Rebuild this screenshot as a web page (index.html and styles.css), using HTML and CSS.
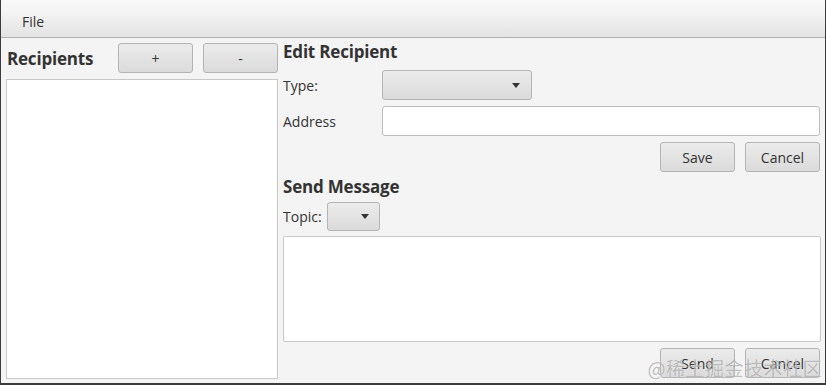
FILE: index.html
```html
<!DOCTYPE html>
<html>
<head>
<meta charset="utf-8">
<link rel="stylesheet" href="styles.css">
</head>
<body>
<div class="window">
  <div class="menubar"><span class="menu">File</span></div>
  <div class="main">
    <section class="left">
      <div class="left-head">
        <h2 class="title">Recipients</h2>
        <button class="btn">+</button>
        <button class="btn">-</button>
      </div>
      <div class="list"></div>
    </section>
    <section class="right">
      <h2 class="title title-edit">Edit Recipient</h2>
      <div class="form">
        <label class="label">Type:</label>
        <div class="combo combo-type"><span class="arrow"></span></div>
        <label class="label">Address</label>
        <div class="field"></div>
      </div>
      <div class="actions">
        <button class="btn">Save</button>
        <button class="btn">Cancel</button>
      </div>
      <h2 class="title title-send">Send Message</h2>
      <div class="topic-row">
        <label class="label">Topic:</label>
        <div class="combo combo-topic"><span class="arrow"></span></div>
      </div>
      <div class="message"></div>
      <div class="actions">
        <button class="btn">Send</button>
        <button class="btn">Cancel</button>
      </div>
    </section>
  </div>
  <div class="watermark">@稀土掘金技术社区</div>
</div>
</body>
</html>
```

FILE: styles.css
```css
* { box-sizing: border-box; }
html, body { margin: 0; padding: 0; }
body {
  width: 826px;
  height: 385px;
  overflow: hidden;
  font-family: "Open Sans", "Noto Sans", sans-serif;
  color: #333333;
}
.window {
  position: relative;
  width: 826px;
  height: 385px;
  background: #f4f4f4;
  border-left: 1px solid #3c3c3c;
  border-right: 1px solid #3c3c3c;
  border-bottom: 2px solid #3c3c3c;
  display: flex;
  flex-direction: column;
}
.menubar {
  height: 38px;
  flex: none;
  background: linear-gradient(#f9f9f9 0%, #f3f3f3 35%, #e3e3e3 100%);
  border-bottom: 1px solid #b0b0b0;
  display: flex;
  align-items: center;
  padding-left: 21px;
}
.menu {
  font-size: 14px;
  color: #333;
  padding-top: 6px;
}
.main {
  flex: 1;
  display: flex;
  gap: 5px;
  padding: 0 4px 0 5px;
}
.left {
  width: 272px;
  flex: none;
  padding-top: 5px;
  display: flex;
  flex-direction: column;
  gap: 6px;
}
.left-head {
  height: 30px;
  display: flex;
  align-items: center;
  gap: 10px;
}
.left-head .title { flex: 1; padding-left: 1px; }
.left-head .btn { width: 75px; }
.title {
  margin: 0;
  font-size: 17px;
  font-weight: 700;
  color: #333;
  letter-spacing: -0.2px;
}
.list {
  height: 300px;
  background: #fff;
  border: 1px solid #c8c8c8;
}
.right {
  flex: 1;
  display: flex;
  flex-direction: column;
}
.title-edit {
  height: 27px;
  line-height: 27px;
  margin-bottom: 5px;
}
.title-send {
  height: 29px;
  line-height: 29px;
}
.btn {
  height: 30px;
  padding: 0;
  border: 1px solid #b4b4b4;
  border-radius: 3px;
  background: linear-gradient(#ebebeb, #dbdbdb);
  font-family: inherit;
  font-size: 14px;
  color: #333;
}
.form {
  display: grid;
  grid-template-columns: 99px 1fr;
  grid-auto-rows: 30px;
  row-gap: 6px;
  align-items: center;
}
.label {
  font-size: 14px;
  color: #333;
}
.combo {
  height: 30px;
  border: 1px solid #b4b4b4;
  border-radius: 3px;
  background: linear-gradient(#ebebeb, #dbdbdb);
  display: flex;
  align-items: center;
  justify-content: flex-end;
}
.combo-type { width: 150px; padding-right: 11px; }
.combo-topic { width: 53px; padding-right: 10px; height: 29px; }
.arrow {
  width: 0;
  height: 0;
  border-left: 4px solid transparent;
  border-right: 4px solid transparent;
  border-top: 5px solid #333;
  margin-top: 1px;
}
.field {
  height: 30px;
  background: #fff;
  border: 1px solid #bdbdbd;
  border-radius: 3px;
  margin-right: 1px;
}
.actions {
  margin-top: 6px;
  display: flex;
  justify-content: flex-end;
  gap: 10px;
  padding-right: 1px;
}
.actions .btn { width: 75px; }
.topic-row {
  height: 30px;
  display: flex;
  align-items: center;
  gap: 5px;
}
.message {
  margin-top: 5px;
  height: 106px;
  background: #fff;
  border: 1px solid #c8c8c8;
  border-radius: 2px;
}
.watermark {
  position: absolute;
  right: 3px;
  bottom: 2px;
  font-family: "Noto Sans CJK SC", sans-serif;
  font-size: 19px;
  line-height: 26px;
  color: rgba(110, 110, 110, 0.45);
  text-shadow: 0 0 1px rgba(255,255,255,0.8);
  letter-spacing: 0.5px;
  pointer-events: none;
}
```
